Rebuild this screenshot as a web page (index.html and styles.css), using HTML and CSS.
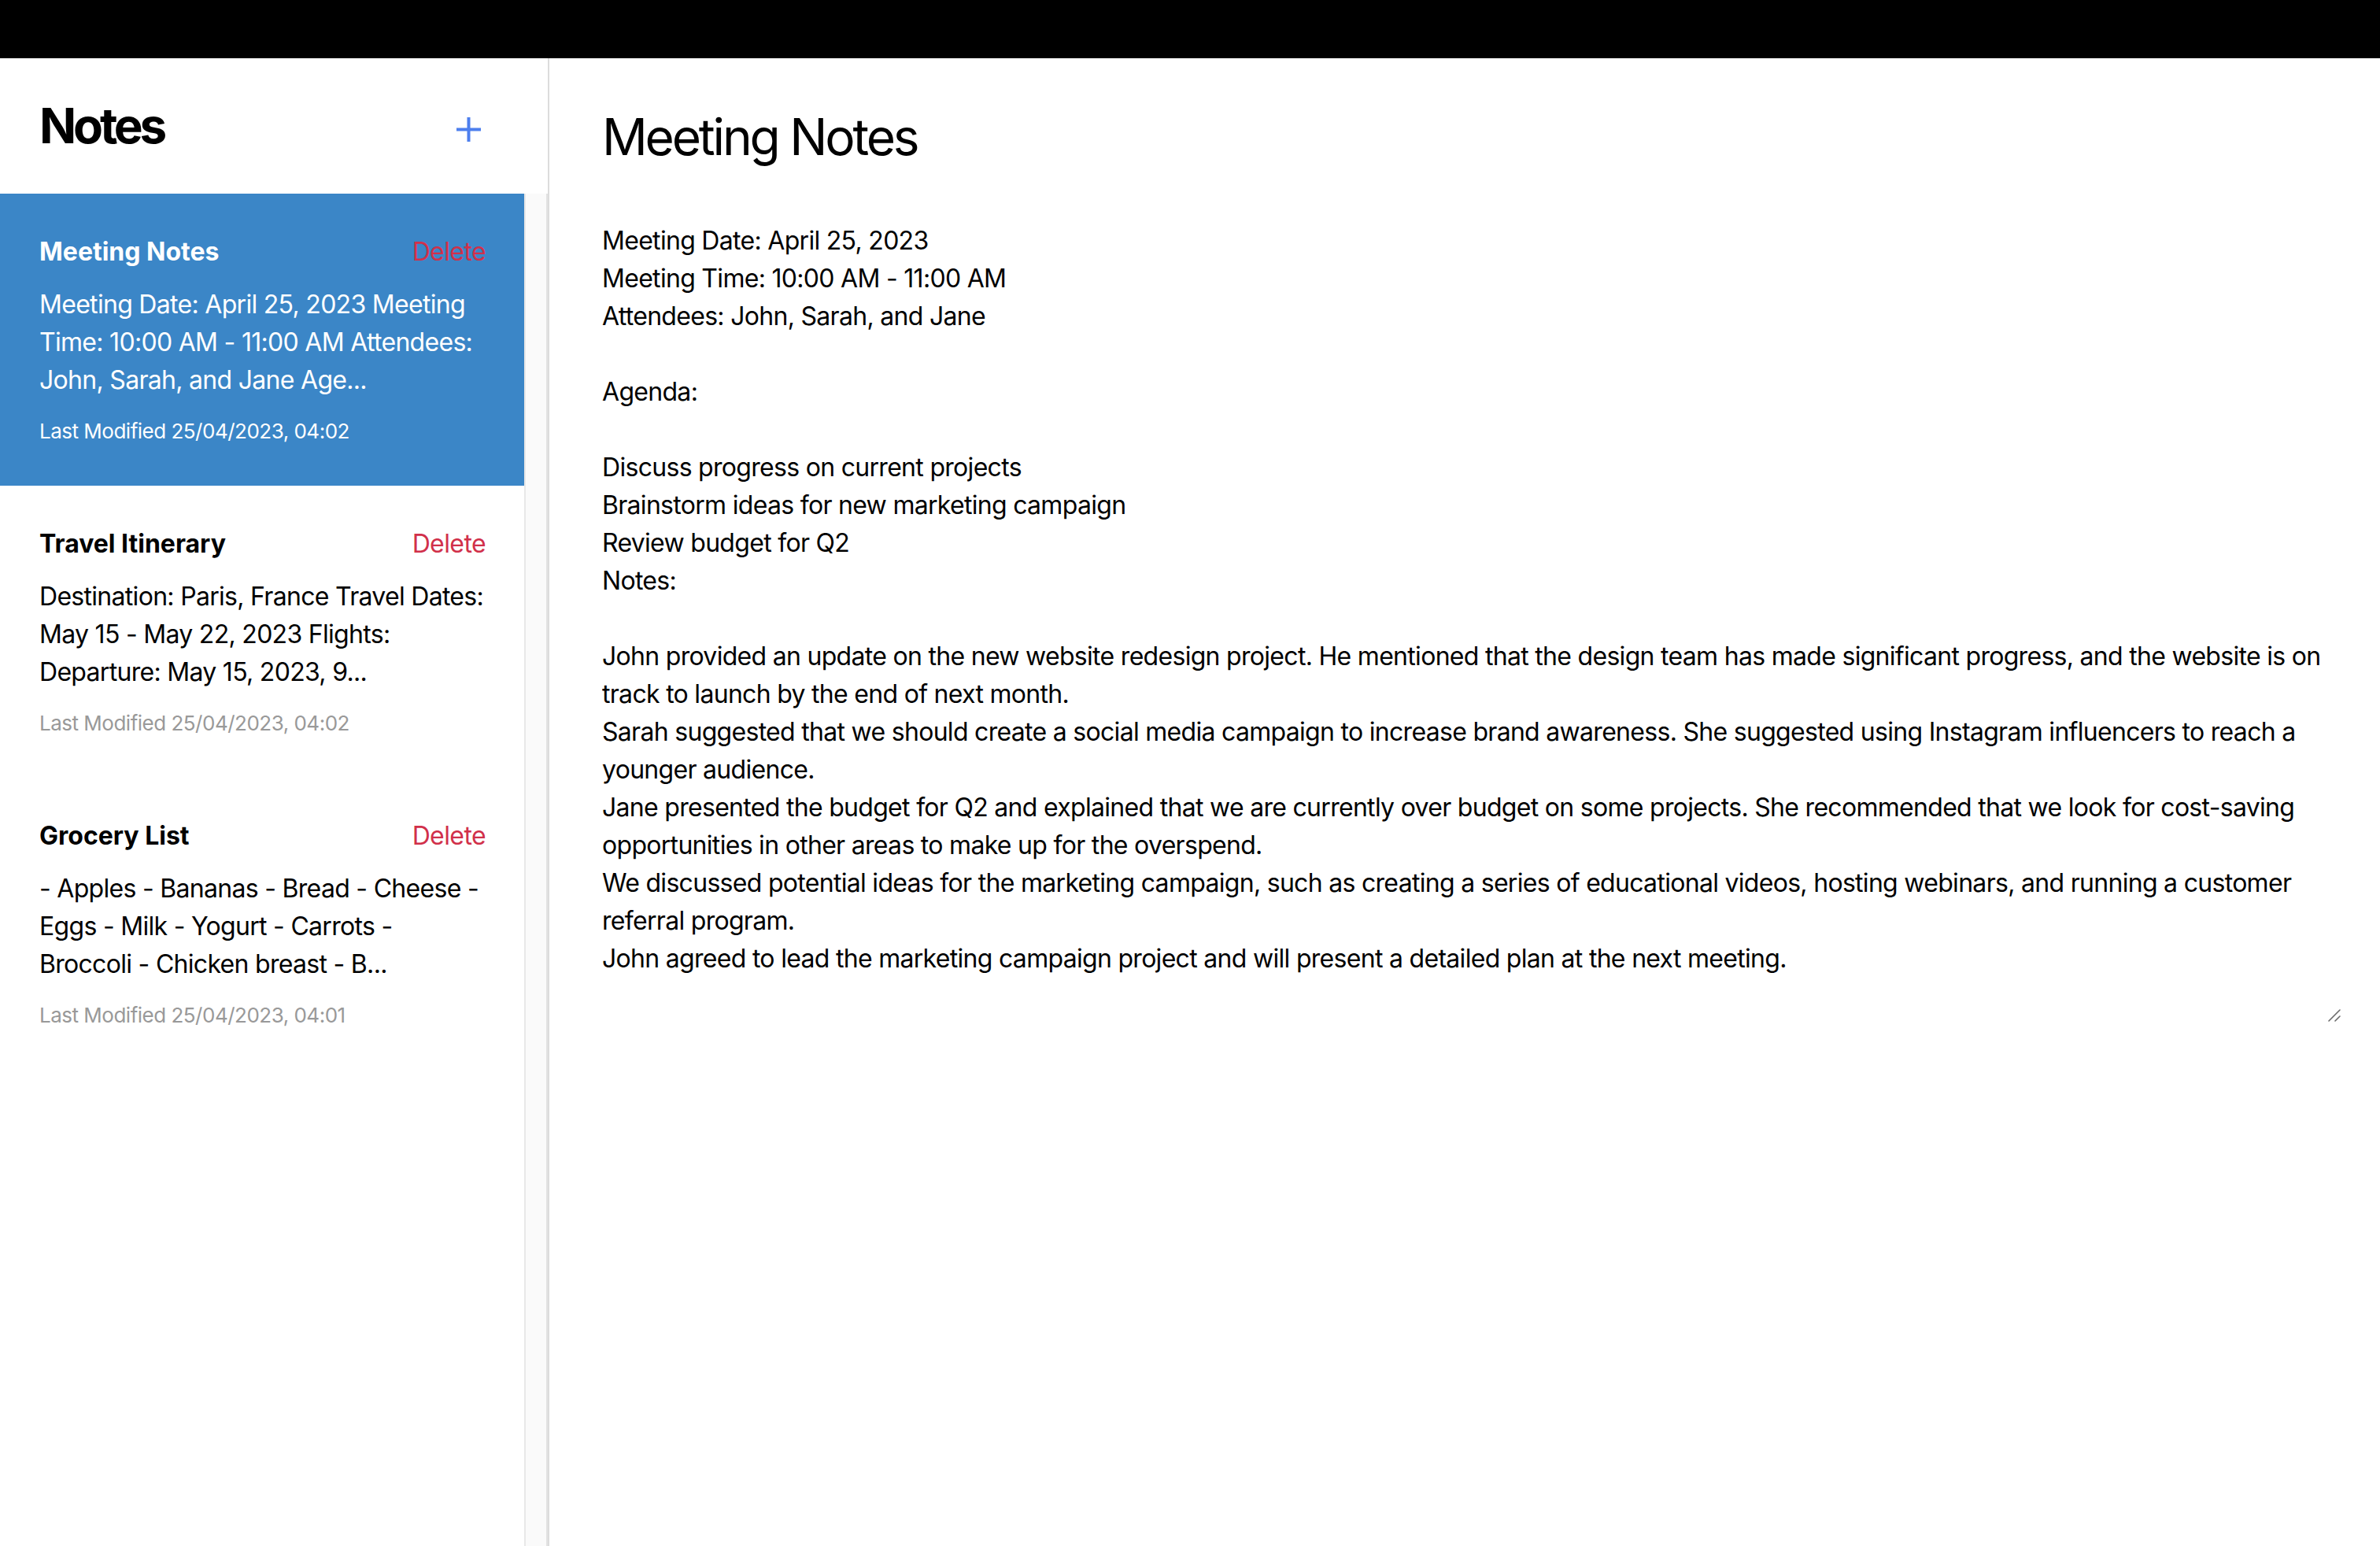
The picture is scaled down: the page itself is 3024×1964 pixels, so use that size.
FILE: index.html
```html
<!DOCTYPE html>
<html lang="en">
<head>
<meta charset="utf-8">
<title>Notes</title>
<link rel="stylesheet" href="styles.css">
</head>
<body>
<div class="topbar"></div>
<div class="app">
  <aside class="sidebar">
    <div class="sidebar-header">
      <h1 class="sidebar-title">Notes</h1>
      <button class="add-btn" type="button" aria-label="Add note">
        <svg width="31" height="31" viewBox="0 0 31 31"><rect x="0" y="13.5" width="31" height="4" fill="currentColor"/><rect x="13.5" y="0" width="4" height="31" fill="currentColor"/></svg>
      </button>
    </div>
    <div class="list-wrap">
      <ul class="note-list">
        <li class="note active">
          <div class="note-head">
            <strong class="note-title">Meeting Notes</strong>
            <button class="delete-btn" type="button">Delete</button>
          </div>
          <p class="note-preview">Meeting Date: April 25, 2023 Meeting Time: 10:00 AM - 11:00 AM Attendees: John, Sarah, and Jane Age...</p>
          <small class="note-meta">Last Modified 25/04/2023, 04:02</small>
        </li>
        <li class="note">
          <div class="note-head">
            <strong class="note-title">Travel Itinerary</strong>
            <button class="delete-btn" type="button">Delete</button>
          </div>
          <p class="note-preview">Destination: Paris, France Travel Dates: May 15 - May 22, 2023 Flights: Departure: May 15, 2023, 9...</p>
          <small class="note-meta">Last Modified 25/04/2023, 04:02</small>
        </li>
        <li class="note">
          <div class="note-head">
            <strong class="note-title">Grocery List</strong>
            <button class="delete-btn" type="button">Delete</button>
          </div>
          <p class="note-preview">- Apples - Bananas - Bread - Cheese - Eggs - Milk - Yogurt - Carrots - Broccoli - Chicken breast - B...</p>
          <small class="note-meta">Last Modified 25/04/2023, 04:01</small>
        </li>
      </ul>
      <div class="scroll-track"></div>
    </div>
  </aside>
  <main class="editor">
    <h1 class="editor-title">Meeting Notes</h1>
    <div class="editor-field">
      <textarea class="editor-body" spellcheck="false">Meeting Date: April 25, 2023
Meeting Time: 10:00 AM - 11:00 AM
Attendees: John, Sarah, and Jane

Agenda:

Discuss progress on current projects
Brainstorm ideas for new marketing campaign
Review budget for Q2
Notes:

John provided an update on the new website redesign project. He mentioned that the design team has made significant progress, and the website is on track to launch by the end of next month.
Sarah suggested that we should create a social media campaign to increase brand awareness. She suggested using Instagram influencers to reach a younger audience.
Jane presented the budget for Q2 and explained that we are currently over budget on some projects. She recommended that we look for cost-saving opportunities in other areas to make up for the overspend.
We discussed potential ideas for the marketing campaign, such as creating a series of educational videos, hosting webinars, and running a customer referral program.
John agreed to lead the marketing campaign project and will present a detailed plan at the next meeting.</textarea>
      <svg class="resize-grip" width="16" height="16" viewBox="0 0 16 16"><line x1="1" y1="15" x2="15" y2="1" stroke="#6b6b6b" stroke-width="1.6" stroke-linecap="round"/><line x1="9" y1="15" x2="15" y2="9" stroke="#6b6b6b" stroke-width="1.6" stroke-linecap="round"/></svg>
    </div>
  </main>
</div>
</body>
</html>
```

FILE: styles.css
```css
* {
  box-sizing: border-box;
}

html, body {
  margin: 0;
  padding: 0;
  height: 100%;
}

body {
  display: flex;
  flex-direction: column;
  overflow: hidden;
  background: #ffffff;
  color: #000000;
  font-family: Inter, "Noto Sans", sans-serif;
  font-size: 32px;
  letter-spacing: -0.7px;
}

.topbar {
  height: 74px;
  flex: 0 0 74px;
  background: #000000;
}

.app {
  flex: 1;
  display: flex;
  min-height: 0;
}

/* Sidebar */
.sidebar {
  width: 698px;
  flex: 0 0 698px;
  display: flex;
  flex-direction: column;
  border-right: 2px solid #dcdcdc;
}

.sidebar-header {
  display: flex;
  align-items: center;
  justify-content: space-between;
  padding: 48px 85px 48px 50px;
}

.sidebar-title {
  margin: 0;
  font-size: 62px;
  line-height: 76px;
  font-weight: 700;
  letter-spacing: -4.2px;
}

.add-btn {
  border: none;
  background: none;
  padding: 0;
  margin-top: 8px;
  color: #4d7fee;
  display: flex;
  cursor: pointer;
}

.list-wrap {
  flex: 1;
  display: flex;
  min-height: 0;
}

.note-list {
  list-style: none;
  margin: 0;
  padding: 0;
  width: 666px;
  flex: 0 0 666px;
}

.scroll-track {
  flex: 1;
  background: #fafafa;
  border-left: 2px solid #e8e8e8;
  border-right: 2px solid #e2e2e2;
}

.note {
  padding: 50px 49px 50px 50px;
}

.note.active {
  background: #3b86c7;
  color: #ffffff;
}

.note-head {
  display: flex;
  align-items: center;
  justify-content: space-between;
  height: 48px;
  margin-bottom: 19px;
}

.note-title {
  font-weight: 700;
  font-size: 32px;
  line-height: 48px;
  letter-spacing: 0;
}

.delete-btn {
  border: none;
  background: none;
  padding: 0;
  font: inherit;
  font-size: 32px;
  line-height: 48px;
  letter-spacing: -0.6px;
  color: #d1304a;
  cursor: pointer;
}

.note-preview {
  margin: 0;
  font-size: 32px;
  line-height: 48px;
}

.note-meta {
  display: block;
  margin-top: 21px;
  font-size: 26px;
  line-height: 39px;
  letter-spacing: -0.5px;
  color: #999999;
}

.note.active .note-meta {
  color: #ffffff;
}

/* Editor */
.editor {
  flex: 1;
  display: flex;
  flex-direction: column;
  padding: 61px 48px 0 67px;
  min-width: 0;
}

.editor-title {
  margin: 0 0 69px 0;
  font-size: 64px;
  line-height: 78px;
  font-weight: 400;
  letter-spacing: -3.2px;
}

.editor-field {
  position: relative;
  width: 100%;
}

.editor-body {
  display: block;
  width: 100%;
  height: 1018px;
  border: none;
  outline: none;
  padding: 0;
  margin: 0;
  font-family: inherit;
  font-size: 32px;
  line-height: 48px;
  letter-spacing: -0.7px;
  color: #000000;
  background: #ffffff;
  resize: none;
  overflow: hidden;
}

.resize-grip {
  position: absolute;
  right: 2px;
  bottom: 2px;
}
```
